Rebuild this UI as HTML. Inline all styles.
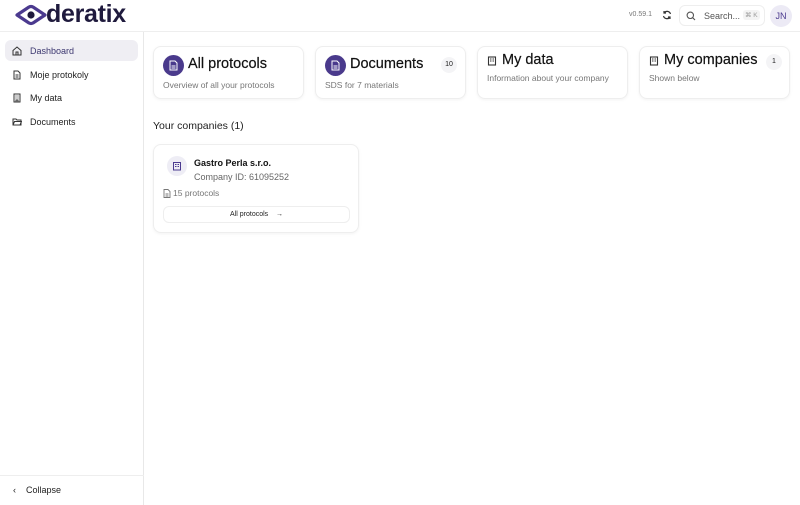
<!DOCTYPE html>
<html><head><meta charset="utf-8"><style>
*{box-sizing:border-box;margin:0;padding:0}
body{width:800px;height:505px;overflow:hidden;background:#fff;font-family:"Liberation Sans",sans-serif;color:#1a1a1a;position:relative}
.hdr{position:absolute;left:0;top:0;width:800px;height:32px;border-bottom:1px solid #eee}
.side{position:absolute;left:0;top:32px;width:144px;height:473px;border-right:1px solid #e8e8e8}
.nav{position:absolute;left:5px;width:133px;height:21px;font-size:9px;display:flex;align-items:center;padding-left:7px;color:#222}
.nav svg{margin-right:8px}
.nav.act{background:#efeef3;border-radius:6px;color:#3d3870}
.card{position:absolute;top:46px;height:53px;border:1px solid #eee;border-radius:8px;box-shadow:0 1px 3px rgba(0,0,0,.05);width:151px}
.t{position:absolute;font-size:14.5px;color:#111;-webkit-text-stroke:0.2px #111}
.s{position:absolute;font-size:8.5px;color:#777}
.circ{position:absolute;width:21px;height:21px;border-radius:50%;background:#4a3a8c}
.badge{position:absolute;font-size:7px;width:16px;height:16px;border-radius:50%;background:#f4f4f6;text-align:center;line-height:16px}
</style></head><body>
<div class="hdr">
<svg style="position:absolute;left:15px;top:4px" width="32" height="22" viewBox="0 0 32 22"><path d="M2 11 L14 3 Q16 2 18 3 L30 11 L18 19 Q16 20 14 19 Z" fill="none" stroke="#4b3a8f" stroke-width="3.2" stroke-linejoin="round"/><circle cx="16" cy="11" r="3.6" fill="#1f1a3d"/></svg>
<div style="position:absolute;left:46px;top:0px;font-size:25px;font-weight:bold;color:#1f1a3d;letter-spacing:-0.3px">deratix</div>
<div style="position:absolute;left:629px;top:11px;font-size:7px;color:#777">v0.59.1</div>
<svg style="position:absolute;left:662px;top:10px" width="10" height="10" viewBox="0 0 10 10" fill="none" stroke="#333" stroke-width="1.2"><path d="M8.5 4A3.6 3.6 0 0 0 2 3M1.5 6A3.6 3.6 0 0 0 8 7"/><path d="M2 1v2h2M8 9V7H6"/></svg>
<div style="position:absolute;left:679px;top:5px;width:86px;height:21px;border:1px solid #eee;border-radius:6px"></div>
<svg style="position:absolute;left:686px;top:11px" width="10" height="10" viewBox="0 0 10 10" fill="none" stroke="#555" stroke-width="1.1"><circle cx="4.3" cy="4.3" r="3.2"/><path d="M6.7 6.7L9 9"/></svg>
<div style="position:absolute;left:704px;top:11px;font-size:9px;color:#555">Search...</div>
<div style="position:absolute;left:743px;top:10px;font-size:6.5px;color:#999;background:#f3f3f3;padding:1px 2px;border-radius:3px">⌘ K</div>
<div style="position:absolute;left:770px;top:5px;width:22px;height:22px;border-radius:50%;background:#eceaf5;font-size:9px;color:#4b3a8f;text-align:center;line-height:22px">JN</div>
</div>
<div class="side">
<div class="nav act" style="top:8px"><svg width="10" height="10" viewBox="0 0 10 10" fill="none" stroke="#333" stroke-width="1"><path d="M1 4.5L5 1l4 3.5V9H1z"/><path d="M4 9V6h2v3"/></svg>Dashboard</div>
<div class="nav" style="top:32px"><svg width="10" height="10" viewBox="0 0 10 10" fill="none" stroke="#333" stroke-width="1"><path d="M2 1h4l2 2v6H2z"/><path d="M3.5 5h3M3.5 7h3"/></svg>Moje protokoly</div>
<div class="nav" style="top:55px"><svg width="10" height="10" viewBox="0 0 10 10" fill="none" stroke="#333" stroke-width="1"><rect x="2" y="1" width="6" height="8"/><path d="M3.5 3h1M5.5 3h1M3.5 5h1M5.5 5h1M4 9V7h2v2"/></svg>My data</div>
<div class="nav" style="top:79px"><svg width="10" height="10" viewBox="0 0 10 10" fill="none" stroke="#333" stroke-width="1"><path d="M1 2h3l1 1h4v5H1z"/><path d="M1 8l1.5-3.5H9.5L8 8"/></svg>Documents</div>
<div style="position:absolute;left:0;top:443px;width:144px;border-top:1px solid #eee"></div>
<div style="position:absolute;left:13px;top:453px;font-size:9px;color:#222">‹ &nbsp;&nbsp;&nbsp;Collapse</div>
</div>

<div class="card" style="left:153px"><div class="circ" style="left:9px;top:8px"></div><svg style="position:absolute;left:15px;top:13px" width="9" height="11" viewBox="0 0 9 11" fill="none" stroke="#fff" stroke-width="1"><path d="M1 1h5l2 2v7H1z"/><path d="M2.5 6h4M2.5 8h4"/></svg><div class="t" style="left:34px;top:9px">All protocols</div><div class="s" style="left:9px;top:33px">Overview of all your protocols</div></div>
<div class="card" style="left:315px"><div class="circ" style="left:9px;top:8px"></div><svg style="position:absolute;left:15px;top:13px" width="9" height="11" viewBox="0 0 9 11" fill="none" stroke="#fff" stroke-width="1"><path d="M1 1h5l2 2v7H1z"/><path d="M2.5 6h4M2.5 8h4"/></svg><div class="t" style="left:34px;top:9px">Documents</div><div class="badge" style="left:125px;top:10px">10</div><div class="s" style="left:9px;top:33px">SDS for 7 materials</div></div>
<div class="card" style="left:477px"><svg style="position:absolute;left:9px;top:9px" width="10" height="10" viewBox="0 0 10 10" fill="none" stroke="#333" stroke-width="1.1"><rect x="1.5" y="1" width="7" height="8"/><path d="M3 3h1.5M5.5 3h1.5M3 5h1.5M5.5 5h1.5"/></svg><div class="t" style="left:24px;top:5px">My data</div><div class="s" style="left:9px;top:26px">Information about your company</div></div>
<div class="card" style="left:639px"><svg style="position:absolute;left:9px;top:9px" width="10" height="10" viewBox="0 0 10 10" fill="none" stroke="#333" stroke-width="1.1"><rect x="1.5" y="1" width="7" height="8"/><path d="M3 3h1.5M5.5 3h1.5M3 5h1.5M5.5 5h1.5"/></svg><div class="t" style="left:24px;top:5px">My companies</div><div class="badge" style="left:126px;top:7px">1</div><div class="s" style="left:9px;top:26px">Shown below</div></div>

<div style="position:absolute;left:153px;top:120px;font-size:10.5px;color:#222">Your companies (1)</div>
<div class="card" style="left:153px;top:144px;width:206px;height:89px">
<div style="position:absolute;left:13px;top:11px;width:20px;height:20px;border-radius:50%;background:#eeedf5"></div>
<svg style="position:absolute;left:18px;top:16px" width="10" height="10" viewBox="0 0 10 10" fill="none" stroke="#4b3a8f" stroke-width="1"><rect x="1.5" y="1.5" width="7" height="7.5"/><path d="M3 3.5h1.5M5.5 3.5h1.5M3 5.5h1.5M5.5 5.5h1.5"/></svg>
<div style="position:absolute;left:40px;top:13px;font-size:9px;font-weight:bold;color:#111">Gastro Perla s.r.o.</div>
<div style="position:absolute;left:40px;top:27px;font-size:9px;color:#666">Company ID: 61095252</div>
<svg style="position:absolute;left:9px;top:44px" width="8" height="9" viewBox="0 0 8 9" fill="none" stroke="#777" stroke-width="0.9"><path d="M1 .5h4l2 2v6H1z"/><path d="M2.5 5h3M2.5 7h3"/></svg>
<div style="position:absolute;left:19px;top:43px;font-size:8.5px;color:#777">15 protocols</div>
<div style="position:absolute;left:9px;top:61px;width:187px;height:17px;border:1px solid #eee;border-radius:6px;font-size:7px;text-align:center;line-height:16px;color:#222">All protocols &nbsp;&nbsp;&nbsp;→</div>
</div>
</body></html>
